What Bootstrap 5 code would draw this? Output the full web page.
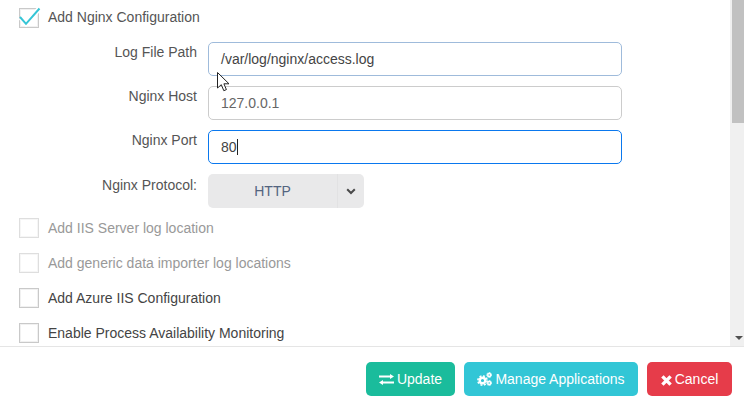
<!DOCTYPE html>
<html lang="en">
<head>
<meta charset="utf-8">
<title>Application settings</title>
<link href="https://cdn.jsdelivr.net/npm/bootstrap@5.3.0/dist/css/bootstrap.min.css" rel="stylesheet">
<style>
html,body{height:100%;margin:0;overflow:hidden}
body{font-family:"Liberation Sans",Arial,sans-serif;font-size:14px;color:#555;background:#fff}
.shell{width:744px;height:408px}
.pane{height:346px;overflow:hidden}
.formarea{width:730px;padding:8px 0 0 19px}
.chk{height:20px;line-height:20px;margin-bottom:15px;color:#444}
.chk.first{color:#555}
.chk.first .ctext{padding-bottom:2px;line-height:18px}
.chk.off{color:#999}
.box{width:20px;height:20px;border:1px solid #c9c9c9;box-shadow:inset 0 0 0 1px #f1f1f1;margin-right:9px;flex:none;position:relative;background:#fff}
.chk.off .box{border-color:#dedede;box-shadow:inset 0 0 0 1px #f6f6f6}
.box svg{position:absolute;left:-1px;top:-4px}
.line{height:34px;margin-bottom:10px}
.lbl{width:178px;text-align:right;padding-top:2px;line-height:16px;color:#555;margin-right:11px;flex:none}
.lbl.low{padding-top:3px}
.fld{width:414px;height:34px;font-size:14px;color:#555;padding:0 12px;border-radius:5px;border:1px solid #ccc;box-shadow:none;line-height:32px;background:#fff}
.fld.hov{border-color:#9fbbdb;color:#444}
.fld.foc{border-color:#0a78ee;color:#444}
.fld.mut{color:#666}
.caret{display:inline-block;width:1px;height:16px;background:#222;vertical-align:-3px}
.sel{width:156px;height:34px;border-radius:5px;background:#e9e9ea;color:#53647f;font-size:14px}
.seltxt{width:129px;text-align:center}
.selbtn{width:27px;border-left:1px solid #e2e2e3}
.track{width:14px;background:#f0f0f0;position:relative;flex:none}
.thumb{position:absolute;left:2px;right:0;top:0;height:123px;background:#c1c1c1}
.arrowdn{position:absolute;left:5px;bottom:6px;width:0;height:0;border-left:4px solid transparent;border-right:4px solid transparent;border-top:4px solid #505050}
.foot{height:62px;border-top:1px solid #e5e5e5;padding:15px 12px 0 0;gap:9px}
.act{height:34px;padding:0;font-size:14px;border:0;border-radius:5px;color:#fff;line-height:34px}
.act svg{vertical-align:-2px;margin-right:3px}
.up{width:89px;background:#1abc9c}
.up svg{vertical-align:-1px}
.mg{width:174px;background:#32c6d6}
.cn{width:85px;background:#e63c4a}
.act:hover{color:#fff}
.ptr{position:absolute;left:217px;top:72px}
</style>
</head>
<body>
<div class="shell d-flex flex-column position-relative">
  <div class="pane d-flex">
    <div class="formarea flex-grow-1">
      <div class="chk first d-flex align-items-center">
        <span class="box"><svg width="24" height="24" viewBox="0 0 24 24"><path d="M1.500 12.500l5.500 6L20 4" fill="none" stroke="#fff" stroke-width="5"/><path d="M1 12l6 6.800L20.500 3.500" fill="none" stroke="#35c5d6" stroke-width="2"/></svg></span><span class="ctext">Add Nginx Configuration</span>
      </div>
      <div class="d-flex line" style="margin-top:-1px">
        <div class="lbl">Log File Path</div>
        <div class="fld hov">/var/log/nginx/access.log</div>
      </div>
      <div class="d-flex line">
        <div class="lbl">Nginx Host</div>
        <div class="fld mut">127.0.0.1</div>
      </div>
      <div class="d-flex line">
        <div class="lbl">Nginx Port</div>
        <div class="fld foc">80<span class="caret"></span></div>
      </div>
      <div class="d-flex line">
        <div class="lbl low">Nginx Protocol:</div>
        <div class="sel d-flex">
          <div class="seltxt align-self-center">HTTP</div>
          <div class="selbtn d-flex align-items-center justify-content-center">
            <svg width="10" height="7" viewBox="0 0 10 7"><path d="M1.200 1.200L5 5l3.800-3.800" fill="none" stroke="#4a4a4a" stroke-width="2"/></svg>
          </div>
        </div>
      </div>
      <div class="chk off d-flex align-items-center"><span class="box"></span>Add IIS Server log location</div>
      <div class="chk off d-flex align-items-center"><span class="box"></span>Add generic data importer log locations</div>
      <div class="chk d-flex align-items-center"><span class="box"></span>Add Azure IIS Configuration</div>
      <div class="chk d-flex align-items-center"><span class="box"></span>Enable Process Availability Monitoring</div>
    </div>
    <div class="track"><div class="thumb"></div><div class="arrowdn"></div></div>
  </div>
  <div class="foot d-flex justify-content-end align-items-start">
    <button type="button" class="btn act up"><svg width="15" height="11" viewBox="0 0 15 11"><path d="M0 1.500h11V0l4 2.500L11 5V3.500H0zM15 7.500H4V6L0 8.500 4 11V9.500h11z" fill="#fff"/></svg>Update</button>
    <button type="button" class="btn act mg"><svg width="15" height="14" viewBox="0 0 15 14"><g fill="none" stroke="#fff"><circle cx="5.500" cy="8.500" r="2.800" stroke-width="2.400"/><circle cx="5.500" cy="8.500" r="4.600" stroke-width="1.600" stroke-dasharray="2 1.600"/><circle cx="12.200" cy="3" r="1.500" stroke-width="1.500"/><circle cx="12.200" cy="3" r="2.500" stroke-width="1" stroke-dasharray="1.300 1"/><circle cx="12.200" cy="11" r="1.500" stroke-width="1.500"/><circle cx="12.200" cy="11" r="2.500" stroke-width="1" stroke-dasharray="1.300 1"/></g></svg>Manage Applications</button>
    <button type="button" class="btn act cn"><svg width="11" height="11" viewBox="0 0 11 11"><path d="M1.400 1.400l8.200 8.200M9.600 1.400L1.400 9.600" stroke="#fff" stroke-width="3.400" fill="none"/></svg>Cancel</button>
  </div>
  <svg class="ptr" width="15" height="21" viewBox="0 0 15 21"><path d="M.5.5v15.500l3.800-3.300 2.500 6 2.600-1.100-2.500-5.800h5.100z" fill="#fff" stroke="#222" stroke-width="1"/></svg>
</div>
</body>
</html>
